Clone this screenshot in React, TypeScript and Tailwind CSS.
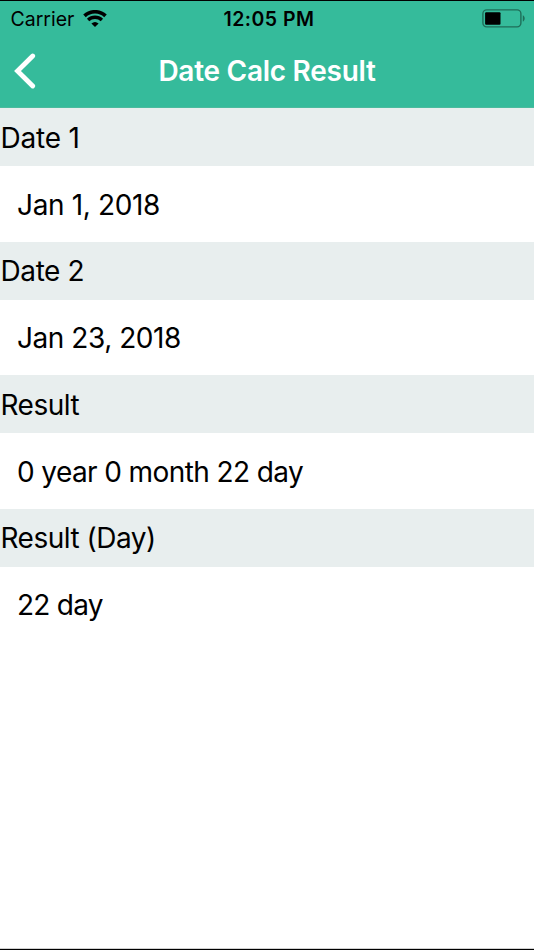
import clsx from "clsx";

const sections = [
  { title: "Date 1", value: "Jan 1, 2018", titleClass: "tracking-[-0.2px]", valueClass: "tracking-[-0.35px]" },
  { title: "Date 2", value: "Jan 23, 2018", titleClass: "tracking-[-0.4px]", valueClass: "tracking-[-0.45px]" },
  { title: "Result", value: "0 year 0 month 22 day", titleClass: "tracking-[-0.5px]", valueClass: "tracking-[-0.6px]" },
  { title: "Result (Day)", value: "22 day", titleClass: "tracking-[-0.5px]", valueClass: "tracking-[-0.75px]" },
];

function WifiIcon() {
  return (
    <svg width="24" height="18" viewBox="0 0 24 18" fill="none" stroke="#000">
      <path d="M1.5 5.9A15.4 15.4 0 0 1 22.5 5.9" strokeWidth="3.7" />
      <path d="M5.1 10A10 10 0 0 1 18.9 10" strokeWidth="3.3" />
      <path d="M12 17L8.4 13.6A5.4 5.4 0 0 1 15.6 13.6Z" fill="#000" stroke="none" />
    </svg>
  );
}

function BatteryIcon() {
  return (
    <svg width="44" height="20" viewBox="0 0 44 20" fill="none">
      <rect x="0.9" y="0.9" width="38" height="17" rx="3.8" stroke="#1f6e59" strokeWidth="1.4" />
      <rect x="3.1" y="3.2" width="15.4" height="12.5" rx="1" fill="#000" />
      <path d="M40.8 6.2C43.3 7.2 43.3 11.6 40.8 12.6Z" fill="#1f6e59" />
    </svg>
  );
}

function StatusBar() {
  return (
    <div className="grid h-[35px] grid-cols-3 items-center text-[19.5px] leading-none text-black">
      <div className="flex items-center gap-[9px] pl-[10.5px]">
        <span className="pt-[2px]">Carrier</span>
        <WifiIcon />
      </div>
      <span className="pt-[2px] pl-[4px] text-center font-semibold tracking-[0.5px]">12:05 PM</span>
      <div className="flex justify-end pr-2">
        <BatteryIcon />
      </div>
    </div>
  );
}

export default function App() {
  return (
    <div className="flex h-[950px] w-[534px] flex-col overflow-hidden border-y border-black bg-white font-['Inter','Liberation_Sans',sans-serif] text-black">
      <header className="h-[107px] border-b border-[#4bbb9e] bg-[#35bb9b]">
        <StatusBar />
        <div className="grid h-[71px] grid-cols-[1fr_auto_1fr] items-center">
          <button className="pb-px pl-[14px]" aria-label="Back">
            <svg width="24" height="36" viewBox="0 0 24 36" fill="none">
              <path d="M18.7 3L3.5 18L18.7 33" stroke="#fff" strokeWidth="4.8" strokeLinecap="round" />
            </svg>
          </button>
          <h1 className="pb-px text-[28px] leading-none font-semibold tracking-[-0.27px] text-white">Date Calc Result</h1>
        </div>
      </header>

      <main className="flex-1">
        {sections.map((s) => (
          <section key={s.title}>
            <h2 className={clsx("flex h-[58.25px] items-center bg-[#e8eeee] pt-px pl-[0.5px] text-[28px] leading-none", s.titleClass)}>
              {s.title}
            </h2>
            <p className={clsx("flex h-[75.25px] items-center pt-[2px] pl-[17px] text-[28px] leading-none", s.valueClass)}>
              {s.value}
            </p>
          </section>
        ))}
      </main>
      <div className="h-px bg-[#d0d0d0]" />
    </div>
  );
}
